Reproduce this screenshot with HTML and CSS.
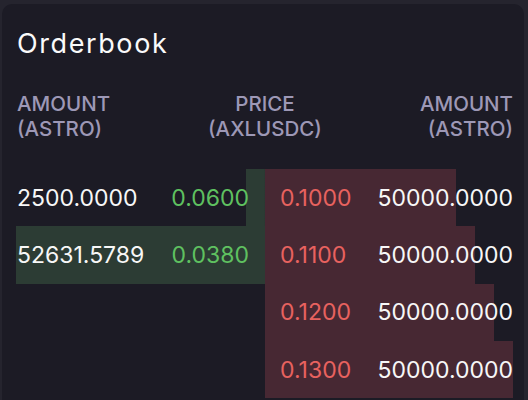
FILE: index.html
```html
<!DOCTYPE html>
<html lang="en">
<head>
<meta charset="utf-8">
<title>Orderbook</title>
<link rel="stylesheet" href="styles.css">
</head>
<body>
<div class="card">
  <h1 class="title">Orderbook</h1>
  <div class="head">
    <div class="h-left">AMOUNT<br>(ASTRO)</div>
    <div class="h-mid">PRICE<br>(AXLUSDC)</div>
    <div class="h-right">AMOUNT<br>(ASTRO)</div>
  </div>
  <div class="book">
    <div class="side">
      <div class="row bid" style="--w:7.6%"><span class="amt">2500.0000</span><span class="px buy">0.0600</span></div>
      <div class="row bid" style="--w:100%"><span class="amt">52631.5789</span><span class="px buy">0.0380</span></div>
    </div>
    <div class="side">
      <div class="row ask" style="--w:76.8%"><span class="px sell">0.1000</span><span class="amt">50000.0000</span></div>
      <div class="row ask" style="--w:84.4%"><span class="px sell">0.1100</span><span class="amt">50000.0000</span></div>
      <div class="row ask" style="--w:92%"><span class="px sell">0.1200</span><span class="amt">50000.0000</span></div>
      <div class="row ask" style="--w:99.6%"><span class="px sell">0.1300</span><span class="amt">50000.0000</span></div>
    </div>
  </div>
</div>
</body>
</html>
```
FILE: styles.css
```css
html, body {
  margin: 0;
  height: 400px;
  overflow: hidden;
  background: #25242e;
  font-family: "Inter", "Liberation Sans", sans-serif;
}

.card {
  box-sizing: border-box;
  height: 396px;
  margin: 4px 4px 0 2px;
  padding: 24px 10px 0 14px;
  background: #1c1b25;
  border-radius: 10px 10px 0 0;
  overflow: hidden;
}

.title {
  margin: 0;
  font-size: 27px;
  line-height: 32px;
  font-weight: 400;
  letter-spacing: 1.6px;
  color: #fafafa;
  padding-left: 1px;
}

.head {
  margin-top: 31px;
  display: grid;
  grid-template-columns: 1fr 1fr 1fr;
  font-size: 20.5px;
  line-height: 25px;
  font-weight: 500;
  color: #9d98b6;
}

.h-left { text-align: left; padding-left: 1px; }
.h-mid { text-align: center; }
.h-right { text-align: right; padding-right: 1px; }

.book {
  margin-top: 28px;
  display: grid;
  grid-template-columns: 1fr 1fr;
  align-items: start;
}

.row {
  height: 57.3px;
  display: flex;
  align-items: center;
  justify-content: space-between;
  font-size: 23px;
}

.bid {
  padding: 0 16px 0 1px;
  background: linear-gradient(#2c3c34, #2c3c34) right top / var(--w) 100% no-repeat;
}

.ask {
  padding: 0 1px 0 15px;
  background: linear-gradient(#472833, #472833) left top / var(--w) 100% no-repeat;
}

.amt { color: #f7f7f7; }
.buy { color: #5fc160; }
.sell { color: #e8625f; }
```
